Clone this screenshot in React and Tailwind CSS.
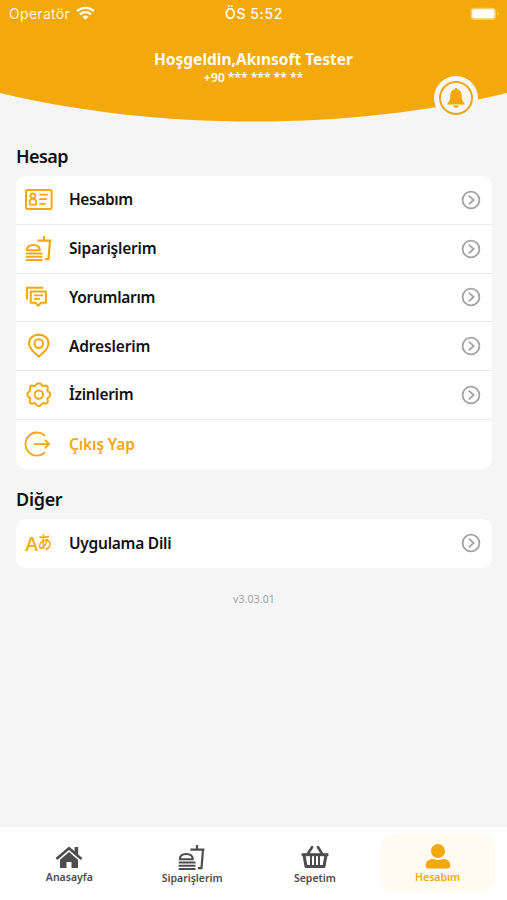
import React from "react";

const MealIcon = ({ className }) => (
  <svg className={className} viewBox="0 0 30 30" fill="none" stroke="currentColor" strokeWidth="2">
    <path d="M2.700 16.200C3 12.600 5.600 11 9.300 11S15.600 12.600 15.900 16.200Z" strokeLinejoin="round" />
    <path d="M1.700 19.400h16.800M1.700 22.700h16.800M1.700 26h16.800" />
    <path d="M13.400 6.600h14M20 2v4.600M26 6.600l-1.500 18.600h-3.600" strokeWidth="2.200" />
  </svg>
);

const CardIcon = () => (
  <svg className="size-[30px]" viewBox="0 0 30 30" fill="none" stroke="currentColor" strokeWidth="2">
    <rect x="2" y="5" width="25.6" height="19" rx="1.5" />
    <circle cx="8.9" cy="10.8" r="2.5" strokeWidth="1.8" />
    <path d="M5.600 19.600v-2.200c0-4.700 6.600-4.700 6.600 0v2.200Z" strokeWidth="1.8" strokeLinejoin="round" />
    <path d="M15.3 9.7h9M15.3 14.2h7.8M15.3 18.8h6.5" strokeWidth="1.7" />
  </svg>
);

const CommentIcon = () => (
  <svg className="size-[30px]" viewBox="0 0 30 30" fill="none" stroke="currentColor" strokeWidth="2">
    <path d="M3 17.500V5.700h16.200" />
    <path d="M6.700 9.600h15.200v11.200h-5l-2.600 3-2.600-3H6.700Z" strokeLinejoin="round" />
    <path d="M9.900 13.400h9M9.900 16.800h6" strokeWidth="1.7" />
  </svg>
);

const PinIcon = () => (
  <svg className="size-[30px]" viewBox="0 0 30 30" fill="none" stroke="currentColor" strokeWidth="2.1">
    <path d="M14.8 25.6C11.3 22.8 5 18 5 12.6C5 7.2 9.4 3.6 14.8 3.6S24.6 7.2 24.6 12.6C24.6 18 18.3 22.8 14.8 25.6Z" strokeLinejoin="round" />
    <circle cx="14.8" cy="12.6" r="4.3" />
  </svg>
);

const GearIcon = () => (
  <svg className="size-[30px]" viewBox="0 0 30 30" fill="none" stroke="currentColor" strokeWidth="2">
    <path
      strokeLinejoin="round"
      d="M11.900 5Q12.800 3.200 14.800 3.200T17.700 5Q18.500 6.800 20.200 5.900Q22 5.200 23.200 6.300T23.600 9.300Q22.700 11 24.500 11.700Q26.200 12.600 26.200 14.600T24.500 17.500Q22.700 18.200 23.600 19.900Q24.300 21.700 23.200 22.900T20.200 23.300Q18.500 22.400 17.700 24.200Q16.800 26 14.800 26T11.900 24.200Q11.100 22.400 9.400 23.300Q7.600 24 6.400 22.900T6 19.900Q6.900 18.200 5.100 17.500Q3.400 16.600 3.400 14.600T5.100 11.700Q6.900 11 6 9.300Q5.300 7.500 6.400 6.300T9.400 5.900Q11.100 6.800 11.900 5Z"
    />
    <circle cx="14.8" cy="14.6" r="4.2" />
  </svg>
);

const ExitIcon = () => (
  <svg className="size-[30px]" viewBox="0 0 30 30" fill="none" stroke="currentColor" strokeWidth="1.8">
    <path d="M20.500 6.200A11.600 11.600 0 1 0 20.500 24" strokeLinecap="round" />
    <path d="M10.5 15.1h14.6M21.4 11.500l3.800 3.600-3.800 3.600" strokeLinecap="round" />
  </svg>
);

const LanguageIcon = () => (
  <span className="flex size-[30px] items-end pl-px leading-none">
    <span className="font-['Inter','Liberation_Sans',sans-serif] text-[19px] leading-[27px] font-medium">A</span>
    <span className="-ml-px origin-bottom scale-y-125 font-['Noto_Sans_CJK_JP',sans-serif] text-[14.5px] leading-[27px] font-medium">あ</span>
  </span>
);

const ChevronIcon = () => (
  <svg className="size-5 text-[#a3a3a3]" viewBox="0 0 20 20" fill="none" stroke="currentColor" strokeWidth="1.8">
    <circle cx="10" cy="10" r="8.4" />
    <path d="M7.8 5.7L12.6 10L7.8 14.3" />
  </svg>
);

const HomeIcon = () => (
  <svg className="size-[30px]" viewBox="0 0 30 30" fill="currentColor">
    <path d="M15 3.400L20.600 8.300V4h3.600v7.400l4.200 3.600-1.700 2L15 7 3.300 17l-1.700-2Z" />
    <path d="M15 9l9 7.700v8.300h-6.500v-6h-5v6H6v-8.300Z" />
  </svg>
);

const BasketIcon = () => (
  <svg className="size-[30px]" viewBox="0 0 30 30" fill="none" stroke="currentColor">
    <path d="M12 4.200L7.800 11M18 4.200L22.200 11" strokeWidth="2.6" strokeLinecap="round" />
    <path d="M1.600 11.700h26.800" strokeWidth="3" />
    <path d="M4 12l2 11.600h18L26 12" strokeWidth="3" strokeLinejoin="round" />
    <path d="M11 12v11M15 12v11M19 12v11" strokeWidth="2" />
  </svg>
);

const UserIcon = () => (
  <svg className="size-[30px]" viewBox="0 0 30 30" fill="currentColor">
    <circle cx="15" cy="8" r="7" />
    <path d="M2.600 22.600c0-4.200 3.500-6.500 7-6.500 2 0 3 .9 5.400.9s3.400-.9 5.400-.9c3.500 0 7 2.300 7 6.500 0 1.800-.8 2.800-2.600 2.800H5.200c-1.800 0-2.600-1-2.600-2.800Z" />
  </svg>
);

const accountItems = [
  { label: "Hesabım", icon: <CardIcon />, spacing: "tracking-[-0.4px]" },
  { label: "Siparişlerim", icon: <MealIcon className="size-[30px]" />, spacing: "tracking-[-0.2px]" },
  { label: "Yorumlarım", icon: <CommentIcon />, spacing: "tracking-[-0.3px]" },
  { label: "Adreslerim", icon: <PinIcon />, spacing: "tracking-[-0.15px]" },
  { label: "İzinlerim", icon: <GearIcon />, spacing: "tracking-[-0.3px]" },
  { label: "Çıkış Yap", icon: <ExitIcon />, spacing: "tracking-[-0.1px]", logout: true },
];

const otherItems = [
  { label: "Uygulama Dili", icon: <LanguageIcon />, spacing: "tracking-[-0.25px]" },
];

const tabs = [
  { label: "Anasayfa", icon: <HomeIcon />, shift: "-mt-[3px]" },
  { label: "Siparişlerim", icon: <MealIcon className="size-[30px]" />, shift: "-mt-[2px]" },
  { label: "Sepetim", icon: <BasketIcon />, shift: "-mt-[2px]" },
  { label: "Hesabım", icon: <UserIcon />, shift: "-mt-[3px]", active: true },
];

const MenuCard = ({ items }) => (
  <div className="overflow-hidden rounded-[10px] bg-white">
    {items.map((item) => (
      <div
        key={item.label}
        className="flex h-[48.8px] items-center border-b border-[#e9e9e9] pr-[11px] pl-2 last:border-b-0"
      >
        <span className="text-[#f3a80e]">{item.icon}</span>
        <span
          className={`ml-[15px] flex-1 text-[15.5px] font-semibold ${item.spacing} ${
            item.logout ? "text-[#f3a80e]" : "text-[#111]"
          }`}
        >
          {item.label}
        </span>
        {!item.logout && <ChevronIcon />}
      </div>
    ))}
  </div>
);

const App = () => {
  return (
    <div className="flex h-[900px] w-[507px] flex-col overflow-hidden bg-[#f5f5f5] font-['Noto_Sans','Open_Sans',sans-serif]">
      <header className="relative h-[122px] shrink-0 text-[#fffdf6]">
        <svg className="absolute inset-0 h-[122px] w-[507px]" viewBox="0 0 507 122">
          <path d="M0 0H507V93C427 112 342 121.5 253.5 121.5S80 112 0 93Z" fill="#f3a90b" />
        </svg>

        <div className="relative grid h-7 grid-cols-3 items-center px-[9px] font-['Inter','Liberation_Sans',sans-serif] text-[14px]">
          <div className="-mt-px flex items-center gap-[6px]">
            <span className="tracking-[0.3px] text-[#fff3d6]">Operatör</span>
            <svg className="-mt-px h-[14px] w-[19px]" viewBox="0 0 19 14" fill="none" stroke="currentColor" strokeWidth="2.4">
              <path d="M1 5.2C5.8.7 13.2.7 18 5.2M4 8.3c3.2-2.9 7.8-2.9 11 0" />
              <path d="M9.5 13.8L6.4 10.7c1.8-1.6 4.4-1.6 6.2 0Z" fill="currentColor" stroke="none" />
            </svg>
          </div>
          <span className="-mt-px pl-px text-center font-medium tracking-[0.6px]">ÖS 5:52</span>
          <svg className="-mt-px -mr-[2px] h-[14px] w-[30px] justify-self-end" viewBox="0 0 30 14">
            <rect x="0.5" y="0.7" width="25.5" height="12.2" rx="4" fill="#f8cb6d" />
            <rect x="2.2" y="2.3" width="22.2" height="9" rx="2.2" fill="#fff" />
            <path d="M27.4 4.8c1.8.6 1.8 3.4 0 4Z" fill="#f8cb6d" />
          </svg>
        </div>

        <div className="relative mt-[21px] text-center">
          <h1 className="text-[15.5px] leading-5 font-bold">Hoşgeldin,Akınsoft Tester</h1>
          <p className="text-[12.5px] leading-[18px] font-semibold tracking-[-0.2px]">+90 *** *** ** **</p>
        </div>

        <div className="absolute top-[76px] left-[434px] flex size-[44px] items-center justify-center rounded-full bg-[#f7f6f4]">
          <div className="flex size-[34px] items-center justify-center rounded-full border-2 border-[#eda71b]">
            <svg className="h-[20px] w-[18px] text-[#f3a80e]" viewBox="0 0 18 20" fill="currentColor">
              <path d="M9 0c.8 0 1.3.5 1.3 1.3 3 .7 4.4 3 4.4 6 0 4.200.8 6 2.500 7.400.8.9.2 1.900-.700 1.900H1.500c-.9 0-1.500-1-.700-1.900C2.500 13.300 3.300 11.500 3.300 7.300c0-3 1.400-5.300 4.400-6C7.700.5 8.200 0 9 0Z" />
              <path d="M6.300 17.400h5.400c-.3 3.200-5.100 3.200-5.400 0Z" />
            </svg>
          </div>
        </div>
      </header>

      <main className="flex flex-1 flex-col pt-[21px] pr-[15px] pl-4">
        <h2 className="h-[33px] text-[18px] leading-[26px] font-semibold tracking-[-0.6px] text-[#111]">Hesap</h2>
        <MenuCard items={accountItems} />
        <h2 className="mt-[17px] h-[33px] text-[18px] leading-[26px] font-semibold tracking-[-0.3px] text-[#111]">Diğer</h2>
        <MenuCard items={otherItems} />
        <p className="mt-[22px] text-center text-[10.5px] leading-[18px] tracking-[0.1px] text-[#a5a5a5]">v3.03.01</p>
      </main>

      <nav className="grid h-[74px] grid-cols-4 border-t border-[#efefef] bg-white px-2 pt-[7px] pb-2">
        {tabs.map((tab) => (
          <div
            key={tab.label}
            className={`mx-1 flex flex-col items-center rounded-[14px] pt-[9px] ${
              tab.active ? "bg-[#fffbf0] text-[#f3a80e]" : "text-[#4d4d4d]"
            }`}
          >
            {tab.icon}
            <span className={`${tab.shift} text-[10.5px] leading-[14px] font-semibold`}>{tab.label}</span>
          </div>
        ))}
      </nav>
    </div>
  );
};

export default App;
